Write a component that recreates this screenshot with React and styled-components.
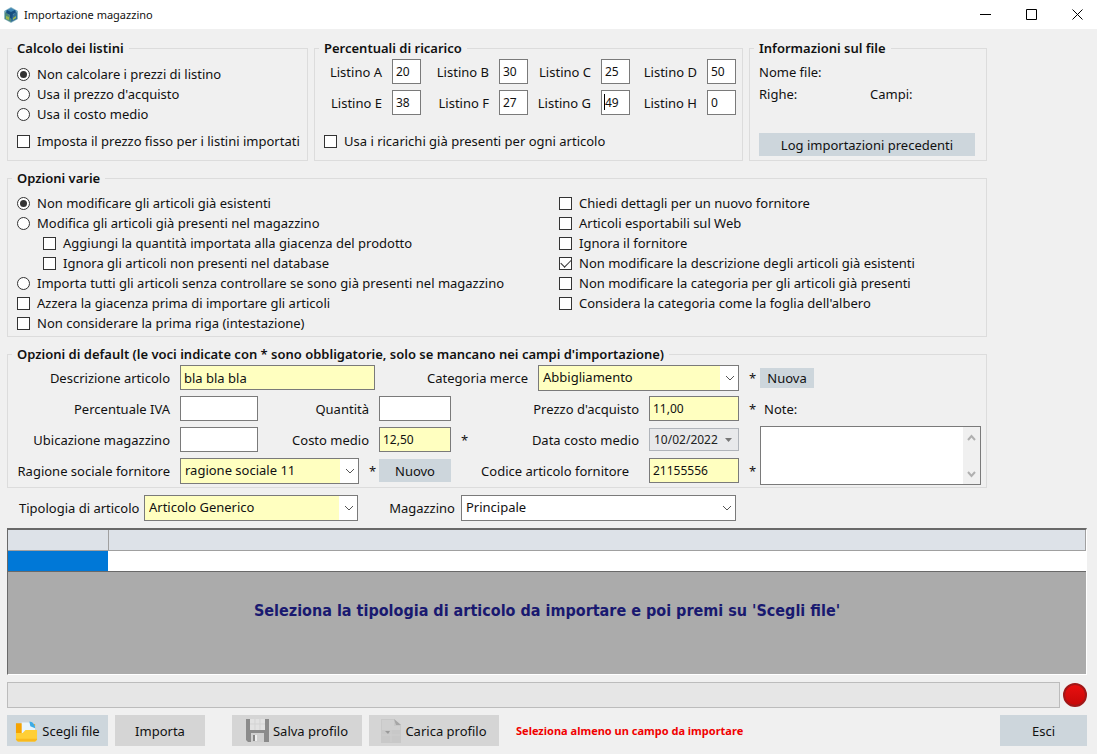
import React from 'react'
import styled, { createGlobalStyle } from 'styled-components'

const GlobalStyle = createGlobalStyle`
    * { box-sizing: border-box; }
    body {
      margin: 0;
      background: #f0f0f0;
      color: #111;
      font-family: "Noto Sans", "Open Sans", sans-serif;
      font-size: 13px;
    }
    button, input, select, textarea {
      font-family: inherit;
      color: inherit;
      margin: 0;
    }
`

const Window = styled.div`
    min-height: 100vh;
    display: flex;
    flex-direction: column;
`
const TitleBar = styled.header`
    height: 29px;
    padding-left: 4px;
    display: flex;
    align-items: center;
    gap: 6px;
    background: white;
`
const Title = styled.h1`
    flex: 1;
    margin: 0;
    font-size: 11px;
    line-height: 28px;
    font-weight: normal;
`
const WindowButton = styled.button`
    width: 40px;
    height: 28px;
    padding: 0;
    border: none;
    background: transparent;
    display: flex;
    align-items: center;
    justify-content: center;
`
const Content = styled.main`
    flex: 1;
    padding: 11px 10px 8px 7px;
    display: flex;
    flex-direction: column;
`
const Groups = styled.div`
    margin-right: 100px;
    display: flex;
    flex-direction: column;
    gap: 9px;
`
const TopGroups = styled.div`
    display: grid;
    grid-template-columns: 301fr 429fr 238fr;
    column-gap: 6px;
`
const Group = styled.fieldset`
    min-width: 0;
    margin: 0;
    padding: ${props => props.$padding || '8px 5px 3px 9px'};
    border: 1px solid #dcdcdc;
`
const Legend = styled.legend`
    margin-left: -5px;
    padding: 0 5px;
    font-weight: 600;
    line-height: 16px;
    white-space: nowrap;
`
const Check = styled.label`
    height: 20px;
    margin-top: ${props => props.$space || 0}px;
    margin-left: ${props => (props.$nested ? 26 : 0)}px;
    display: flex;
    align-items: center;
    gap: 7px;
    white-space: nowrap;
`
const Tick = styled.input`
    appearance: none;
    flex: none;
    width: 13px;
    height: 13px;
    border: 1px solid #333;
    border-radius: ${props => (props.type === 'radio' ? '50%' : 0)};
    background: white;
    display: flex;
    justify-content: center;
    align-items: center;

    &[type='radio']:checked::before {
      content: '';
      width: 7px;
      height: 7px;
      border-radius: 50%;
      background: #333;
    }
    &[type='checkbox']:checked::before {
      content: '';
      width: 9px;
      height: 5px;
      margin-bottom: 3px;
      border-left: 1px solid #333;
      border-bottom: 1px solid #333;
      transform: rotate(-45deg);
    }
`
const Prices = styled.div`
    display: grid;
    grid-template-columns: 97fr 107fr 102fr 106fr;
    row-gap: 6px;
`
const Price = styled.label`
    display: flex;
    justify-content: flex-end;
    align-items: center;
    gap: 10px;
    white-space: nowrap;
`
const PriceBox = styled.span`
    position: relative;
    display: flex;
    width: 29px;
`
const Caret = styled.span`
    position: absolute;
    left: 3px;
    top: 4px;
    width: 1px;
    height: 16px;
    background: black;
`
const TextInput = styled.input`
    width: 100%;
    height: 25px;
    padding: 0 3px;
    border: 1px solid #7a7a7a;
    border-radius: 0;
    background: ${props => (props.$required ? '#ffffc0' : 'white')};
    font-size: ${props => (props.$large ? 13 : 12)}px;
`
const InfoRow = styled.div`
    height: 22px;
    display: grid;
    grid-template-columns: 1fr 1fr;
    align-items: center;
`
const Button = styled.button`
    width: ${props => props.$width || '100%'};
    height: ${props => props.$height || 23}px;
    padding: 0 6px;
    border: none;
    background: ${props => (props.disabled ? '#d5d5d5' : '#cdd6dc')};
    color: #111;
    font-size: 13px;
    line-height: 18px;
    white-space: nowrap;
    display: flex;
    align-items: center;
    justify-content: center;
    gap: 4px;
`
const LogButton = styled(Button)`
    margin-top: 28px;
    width: calc(100% - 6px);
`
const Options = styled.div`
    display: grid;
    grid-template-columns: 542fr 422fr;
`
const Defaults = styled.div`
    display: grid;
    grid-template-columns: 163px 78px 121px 72px 87px 111px 90px 21px 1fr;
    grid-auto-rows: 31px;
    align-items: center;
`
const Label = styled.label`
    grid-column: span ${props => props.$span || 1};
    padding-right: ${props => props.$inset || 10}px;
    display: flex;
    justify-content: flex-end;
    white-space: nowrap;
`
const Cell = styled.div`
    grid-column: span ${props => props.$span || 1};
    min-width: 0;
    padding-right: ${props => props.$inset || 0}px;
    display: flex;
    align-items: center;
`
const Star = styled.span`
    flex: none;
    width: 20px;
    padding-left: 10px;
`
const Note = styled.label`
    padding-left: 4px;
`
const NoteBox = styled.div`
    grid-row: span 2;
    height: 59px;
    display: flex;
    border: 1px solid #7a7a7a;
    background: white;
`
const NoteText = styled.textarea`
    flex: 1;
    min-width: 0;
    padding: 3px;
    border: none;
    resize: none;
    background: transparent;
    font-size: 12px;
`
const ScrollBar = styled.div`
    width: 17px;
    padding: 7px 0 6px;
    background: #f0f0f0;
    display: flex;
    flex-direction: column;
    align-items: center;
    justify-content: space-between;
`
const SelectBox = styled.div`
    position: relative;
    flex: ${props => (props.$width ? 'none' : 1)};
    width: ${props => props.$width || 'auto'};
    height: 26px;

    svg {
      position: absolute;
      right: 4px;
      top: 10px;
      pointer-events: none;
    }
`
const Select = styled.select`
    appearance: none;
    width: 100%;
    height: 100%;
    padding: 0 20px 2px 4px;
    border: 1px solid #7a7a7a;
    border-radius: 0;
    background: ${props => (props.$required
      ? 'linear-gradient(to right, #ffffc0 calc(100% - 18px), white calc(100% - 18px))'
      : 'white')};
    font-size: 13px;
`
const DateBox = styled.div`
    flex: 1;
    min-width: 0;
    height: 23px;
    padding-right: 6px;
    display: flex;
    align-items: center;
    border: 1px solid #b0b4ba;
    background: #e8e9eb;
`
const DateInput = styled.input`
    flex: 1;
    min-width: 0;
    padding: 0 0 0 4px;
    border: none;
    background: transparent;
    font-size: 12px;
    color: #222;
`
const TypeRow = styled.div`
    margin: 7px 0;
    padding-left: 12px;
    display: flex;
    align-items: center;
`
const TypeLabel = styled.label`
    width: ${props => props.$width}px;
    padding-right: 6px;
    text-align: ${props => props.$align || 'left'};
    white-space: nowrap;
`
const Preview = styled.section`
    flex: 1;
    min-height: 146px;
    border: 1px solid #696969;
    border-top-width: 2px;
    border-right-color: white;
    border-bottom-color: white;
    background: #ababab;
`
const PreviewTable = styled.table`
    width: 100%;
    table-layout: fixed;
    border-collapse: collapse;

    th {
      height: 20px;
      padding: 0;
      background: #dde2e8;
      border-right: 1px solid #a0a0a0;
      border-bottom: 1px solid #a0a0a0;
    }
    td {
      height: 21px;
      padding: 0;
      background: white;
      border-bottom: 1px solid #696969;
    }
    th:first-child {
      width: 100px;
    }
    td:first-child {
      background: #0078d7;
    }
`
const Hint = styled.p`
    margin: 27px 0 0;
    text-align: center;
    font-family: "DejaVu Sans Condensed", "DejaVu Sans", sans-serif;
    font-size: 16px;
    line-height: 24px;
    font-weight: 700;
    color: #191970;
`
const ProgressRow = styled.div`
    margin: 7px 0;
    display: flex;
    align-items: center;
    gap: 3px;
`
const Progress = styled.progress`
    appearance: none;
    flex: 1;
    height: 26px;
    border: 1px solid #bcbcbc;
    background: #e6e6e6;

    &::-webkit-progress-bar {
      background: #e6e6e6;
    }
`
const Led = styled.span`
    width: 24px;
    height: 24px;
    border: 2px solid #a01818;
    border-radius: 50%;
    background: linear-gradient(#e81010, #c80808);
`
const Footer = styled.footer`
    display: flex;
    align-items: center;
    gap: 7px;
`
const SaveButton = styled(Button)`
    margin-left: 20px;
`
const Warning = styled.p`
    flex: 1;
    margin: 0 0 0 10px;
    color: #f00000;
    font-size: 11px;
    font-weight: 700;
`

const Chevron = () => (
  <svg width="10" height="7" viewBox="0 0 10 7" fill="none" stroke="#555">
    <path d="M1 1l4 4 4-4" />
  </svg>
)

const ScrollArrow = ({ d }) => (
  <svg width="9" height="7" viewBox="0 0 9 7" fill="none" stroke="#b0b0b0" strokeWidth="2">
    <path d={d} />
  </svg>
)

const AppIcon = () => (
  <svg width="14" height="16" viewBox="0 0 14 16">
    <path d="M7 0l7 4v8l-7 4-7-4V4z" fill="#8fb9c4" />
    <path d="M7 1l6 3-6 4-6-4z" fill="#3f86b5" />
    <path d="M1 5l6 4v6l-6-3z" fill="#4f8a7a" />
    <path d="M13 5L7 9v6l6-3z" fill="#356f96" />
    <path d="M3 3l4 2 4-2 1 3-3 1-1 5-2-1V8L2 6z" fill="#174f80" />
    <path d="M2 9l3 1v3l-3-1zM9 11l3-2v2l-3 2z" fill="#9cb84d" />
  </svg>
)

const FolderIcon = () => (
  <svg width="23" height="24" viewBox="0 0 24 24">
    <path d="M1 4h6l1 1h13v9H1z" fill="#f5a300" />
    <path d="M7 3h9l5 4v10H7z" fill="#e9f5fc" />
    <path d="M15 2c3 0 6 3 6 7l-5-2z" fill="#3cabe6" />
    <path d="M1 14h7l3-3h12v10l-2 2H3l-2-2z" fill="#ffcf35" />
    <path d="M1 20h22v1l-2 2H3l-2-2z" fill="#f9b91d" />
  </svg>
)

const FloppyIcon = () => (
  <svg width="23" height="23" viewBox="0 0 23 23">
    <path d="M0 0h23v23H2l-2-2z" fill="#8b8b8b" />
    <path d="M4 0h15v11H4z" fill="#e2e2e2" />
    <path d="M4 5h15M9 0v11M14 0v11" stroke="#d3d3d3" />
    <path d="M5 14h13v9H5z" fill="#cfcfcf" />
    <path d="M7 16h4v6H7z" fill="#858585" />
    <path d="M9 16h2v6H9z" fill="#eee" />
  </svg>
)

const FileIcon = () => (
  <svg width="20" height="24" viewBox="0 0 20 24">
    <path d="M0 0h13l7 6v18H0z" fill="#c8c8c8" />
    <path d="M1 1h12v6h6v4H1z" fill="#d0d0d0" />
    <path d="M13 0l7 6h-5z" fill="#a6a6a6" />
    <path d="M4 12h5l-2 3z" fill="#999" />
    <path d="M1 16h18M10 11v12" stroke="#cecece" />
  </svg>
)

const Option = ({ type = 'checkbox', children, name, checked, nested, space }) => (
  <Check $nested={nested} $space={space}>
    <Tick type={type} name={name} defaultChecked={checked} />
    {children}
  </Check>
)

const Combo = ({ id, value, required, width }) => (
  <SelectBox $width={width}>
    <Select id={id} $required={required} defaultValue={value}>
      <option>{value}</option>
    </Select>
    <Chevron />
  </SelectBox>
)

const prices = [
  ['A', '20'], ['B', '30'], ['C', '25'], ['D', '50'],
  ['E', '38'], ['F', '27'], ['G', '49'], ['H', '0'],
]

const App = () => {
  return (
    <Window>
      <GlobalStyle />
      <TitleBar>
        <AppIcon />
        <Title>Importazione magazzino</Title>
        <WindowButton aria-label="Riduci a icona">
          <svg width="11" height="11" stroke="black"><path d="M0 5.5h11" /></svg>
        </WindowButton>
        <WindowButton aria-label="Ingrandisci">
          <svg width="11" height="11" stroke="black" fill="none"><path d="M.5.5h10v10H.5z" /></svg>
        </WindowButton>
        <WindowButton aria-label="Chiudi">
          <svg width="11" height="11" stroke="black"><path d="M.5.5l10 10M10.5.5l-10 10" /></svg>
        </WindowButton>
      </TitleBar>
      <Content>
        <Groups>
          <TopGroups>
            <Group>
              <Legend>Calcolo dei listini</Legend>
              <Option type="radio" name="calcolo" checked>Non calcolare i prezzi di listino</Option>
              <Option type="radio" name="calcolo">Usa il prezzo d'acquisto</Option>
              <Option type="radio" name="calcolo">Usa il costo medio</Option>
              <Option space={7}>Imposta il prezzo fisso per i listini importati</Option>
            </Group>
            <Group $padding="3px 6px 3px 9px">
              <Legend>Percentuali di ricarico</Legend>
              <Prices>
                {prices.map(([letter, value]) => (
                  <Price key={letter}>
                    Listino {letter}
                    <PriceBox>
                      <TextInput defaultValue={value} />
                      {letter === 'G' && <Caret />}
                    </PriceBox>
                  </Price>
                ))}
              </Prices>
              <Option space={16}>Usa i ricarichi già presenti per ogni articolo</Option>
            </Group>
            <Group $padding="5px 5px 4px 9px">
              <Legend>Informazioni sul file</Legend>
              <InfoRow><span>Nome file:</span></InfoRow>
              <InfoRow><span>Righe:</span><span>Campi:</span></InfoRow>
              <LogButton>Log importazioni precedenti</LogButton>
            </Group>
          </TopGroups>

          <Group $padding="7px 5px 3px 9px">
            <Legend>Opzioni varie</Legend>
            <Options>
              <div>
                <Option type="radio" name="articoli" checked>Non modificare gli articoli già esistenti</Option>
                <Option type="radio" name="articoli">Modifica gli articoli già presenti nel magazzino</Option>
                <Option nested>Aggiungi la quantità importata alla giacenza del prodotto</Option>
                <Option nested>Ignora gli articoli non presenti nel database</Option>
                <Option type="radio" name="articoli">Importa tutti gli articoli senza controllare se sono già presenti nel magazzino</Option>
                <Option>Azzera la giacenza prima di importare gli articoli</Option>
                <Option>Non considerare la prima riga (intestazione)</Option>
              </div>
              <div>
                <Option>Chiedi dettagli per un nuovo fornitore</Option>
                <Option>Articoli esportabili sul Web</Option>
                <Option>Ignora il fornitore</Option>
                <Option checked>Non modificare la descrizione degli articoli già esistenti</Option>
                <Option>Non modificare la categoria per gli articoli già presenti</Option>
                <Option>Considera la categoria come la foglia dell'albero</Option>
              </div>
            </Options>
          </Group>

          <Group $padding="0 5px 1px 9px">
            <Legend>Opzioni di default (le voci indicate con * sono obbligatorie, solo se mancano nei campi d'importazione)</Legend>
            <Defaults>
              <Label htmlFor="descrizione">Descrizione articolo</Label>
              <Cell $span={2} $inset={4}><TextInput id="descrizione" $required $large defaultValue="bla bla bla" /></Cell>
              <Label htmlFor="categoria" $span={2}>Categoria merce</Label>
              <Cell $span={2}><Combo id="categoria" value="Abbigliamento" required /></Cell>
              <Star>*</Star>
              <Cell><Button $width="54px" $height={20}>Nuova</Button></Cell>

              <Label htmlFor="iva">Percentuale IVA</Label>
              <TextInput id="iva" />
              <Label htmlFor="quantita">Quantità</Label>
              <TextInput id="quantita" />
              <Label htmlFor="prezzo" $span={2}>Prezzo d'acquisto</Label>
              <TextInput id="prezzo" $required defaultValue="11,00" />
              <Star>*</Star>
              <Note htmlFor="note">Note:</Note>

              <Label htmlFor="ubicazione">Ubicazione magazzino</Label>
              <TextInput id="ubicazione" />
              <Label htmlFor="costo">Costo medio</Label>
              <TextInput id="costo" $required defaultValue="12,50" />
              <Star>*</Star>
              <Label htmlFor="data">Data costo medio</Label>
              <Cell $span={2} $inset={21}>
                <DateBox>
                  <DateInput id="data" defaultValue="10/02/2022" disabled />
                  <svg width="7" height="4"><path d="M0 0h7L3.500 4z" fill="#777" /></svg>
                </DateBox>
              </Cell>
              <NoteBox>
                <NoteText id="note" />
                <ScrollBar>
                  <ScrollArrow d="M1 6l3.500-4L8 6" />
                  <ScrollArrow d="M1 1l3.500 4L8 1" />
                </ScrollBar>
              </NoteBox>

              <Label htmlFor="ragione">Ragione sociale fornitore</Label>
              <Cell $span={2}>
                <Combo id="ragione" value="ragione sociale 11" required />
                <Star>*</Star>
              </Cell>
              <Button>Nuovo</Button>
              <Label htmlFor="codice" $span={2} $inset={20}>Codice articolo fornitore</Label>
              <TextInput id="codice" $required defaultValue="21155556" />
              <Star>*</Star>
            </Defaults>
          </Group>
        </Groups>

        <TypeRow>
          <TypeLabel htmlFor="tipologia" $width={125}>Tipologia di articolo</TypeLabel>
          <Combo id="tipologia" value="Articolo Generico" required width="214px" />
          <TypeLabel htmlFor="magazzino" $width={103} $align="right">Magazzino</TypeLabel>
          <Combo id="magazzino" value="Principale" width="275px" />
        </TypeRow>

        <Preview>
          <PreviewTable>
            <thead><tr><th /><th /></tr></thead>
            <tbody><tr><td /><td /></tr></tbody>
          </PreviewTable>
          <Hint>Seleziona la tipologia di articolo da importare e poi premi su 'Scegli file'</Hint>
        </Preview>

        <ProgressRow>
          <Progress value="0" max="100" aria-label="Avanzamento" />
          <Led />
        </ProgressRow>

        <Footer>
          <Button $width="101px" $height={31}><FolderIcon />Scegli file</Button>
          <Button $width="90px" $height={31} disabled>Importa</Button>
          <SaveButton $width="130px" $height={31} disabled><FloppyIcon />Salva profilo</SaveButton>
          <Button $width="130px" $height={31} disabled><FileIcon />Carica profilo</Button>
          <Warning>Seleziona almeno un campo da importare</Warning>
          <Button $width="87px" $height={31}>Esci</Button>
        </Footer>
      </Content>
    </Window>
  )
}

export default App
